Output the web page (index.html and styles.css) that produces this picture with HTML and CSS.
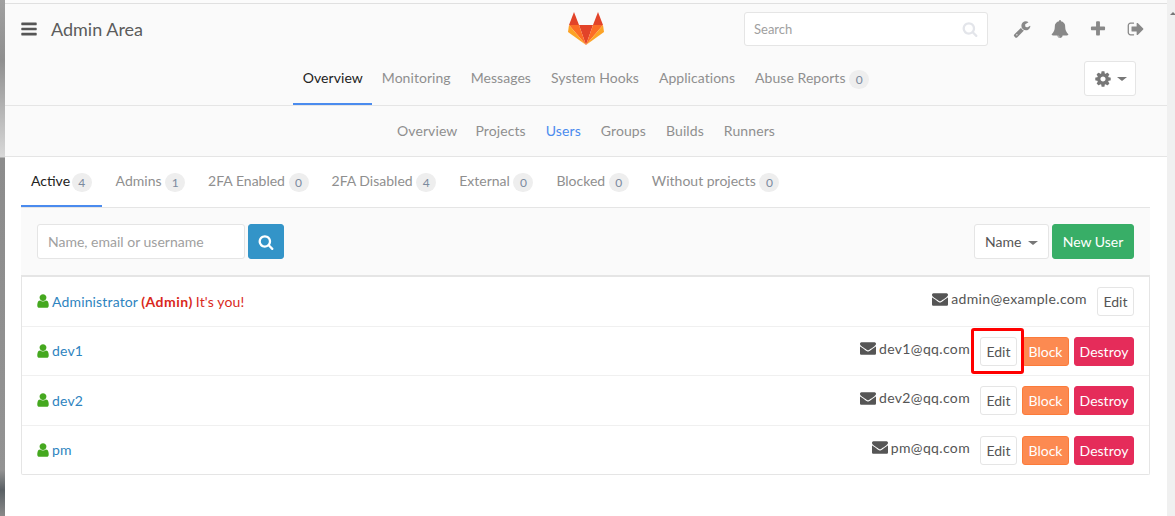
FILE: index.html
```html
<!DOCTYPE html>
<html lang="en">
<head>
  <meta charset="UTF-8" />
  <meta name="viewport" content="width=device-width, initial-scale=1.0" />
  <title>Admin Area</title>
  <link rel="stylesheet" href="styles.css">
</head>
<body>
  <!-- Icon set -->
  <svg class="sprite" xmlns="http://www.w3.org/2000/svg">
    <symbol id="i-bars" viewBox="0 0 1792 1792"><path d="M1664 1344v128q0 26-19 45t-45 19H192q-26 0-45-19t-19-45v-128q0-26 19-45t45-19h1408q26 0 45 19t19 45zm0-512v128q0 26-19 45t-45 19H192q-26 0-45-19t-19-45V832q0-26 19-45t45-19h1408q26 0 45 19t19 45zm0-512v128q0 26-19 45t-45 19H192q-26 0-45-19t-19-45V320q0-26 19-45t45-19h1408q26 0 45 19t19 45z"/></symbol>
    <symbol id="i-search" viewBox="0 0 1792 1792"><path d="M1216 832q0-185-131.500-316.500t-316.500-131.500-316.500 131.500-131.500 316.500 131.500 316.500 316.500 131.500 316.500-131.500 131.500-316.500zm512 832q0 52-38 90t-90 38q-54 0-90-38l-343-342q-179 124-399 124-143 0-273.500-55.500t-225-150-150-225-55.500-273.500 55.500-273.500 150-225 225-150 273.500-55.500 273.500 55.500 225 150 150 225 55.500 273.500q0 220-124 399l343 343q37 37 37 90z"/></symbol>
    <symbol id="i-user" viewBox="0 0 1792 1792"><path d="M1536 1399q0 109-62.500 187t-150.500 78h-854q-88 0-150.500-78t-62.500-187q0-85 8.500-160.500t31.500-152 58.500-131 94-89 134.500-34.500q131 128 313 128t313-128q76 0 134.500 34.500t94 89 58.500 131 31.500 152 8.500 160.500zm-256-887q0 159-112.500 271.500t-271.500 112.500-271.500-112.500-112.500-271.500 112.500-271.500 271.500-112.500 271.500 112.500 112.500 271.500z"/></symbol>
    <symbol id="i-envelope" viewBox="0 0 1792 1792"><path d="M1792 710v794q0 66-47 113t-113 47H160q-66 0-113-47T0 1504V710q44 49 101 87 362 246 497 345 57 42 92.500 65.500t94.500 48 110 24.500h2q51 0 110-24.500t94.500-48 92.500-65.500q170-123 498-345 57-39 100-87zm0-294q0 79-49 151t-122 123q-376 261-468 325-10 7-42.500 30.500t-54 38-52 32.500-57.500 27-50 9h-2q-23 0-50-9t-57.500-27-52-32.500-54-38T639 1015q-91-64-262-182.500T172 690q-62-42-117-115.500T0 438q0-78 41.500-130T160 256h1472q65 0 112.500 47t47.500 113z"/></symbol>
    <symbol id="i-plus" viewBox="0 0 1792 1792"><path d="M1600 736v192q0 40-28 68t-68 28h-416v416q0 40-28 68t-68 28h-192q-40 0-68-28t-28-68v-416h-416q-40 0-68-28t-28-68v-192q0-40 28-68t68-28h416v-416q0-40 28-68t68-28h192q40 0 68 28t28 68v416h416q40 0 68 28t28 68z"/></symbol>
    <symbol id="i-bell" viewBox="0 0 1792 1792"><path d="M912 1696q0-16-16-16-59 0-101.500-42.500t-42.500-101.500q0-16-16-16t-16 16q0 73 51.500 124.500t124.500 51.500q16 0 16-16zm816-288q0 52-38 90t-90 38h-448q0 106-75 181t-181 75-181-75-75-181h-448q-52 0-90-38t-38-90q50-42 91-88t85-119.500 74.500-158.500 50-206 19.500-260q0-152 117-282.500t307-158.500q-8-19-8-39 0-40 28-68t68-28 68 28 28 68q0 20-8 39 190 28 307 158.500t117 282.500q0 139 19.500 260t50 206 74.500 158.500 85 119.500 91 88z"/></symbol>
    <symbol id="i-signout" viewBox="0 0 1792 1792"><path d="M704 1440q0 4 1 20t.5 26.500-3 23.500-10 19.500-20.500 6.500h-320q-119 0-203.500-84.500t-84.500-203.500v-704q0-119 84.500-203.500t203.500-84.500h320q13 0 22.500 9.500t9.500 22.500q0 4 1 20t.5 26.500-3 23.500-10 19.500-20.500 6.500h-320q-66 0-113 47t-47 113v704q0 66 47 113t113 47h312l11.500 1 11.500 3 8 5.500 7 9 2 13.500zm928-544q0 26-19 45l-544 544q-19 19-45 19t-45-19-19-45v-288h-448q-26 0-45-19t-19-45v-384q0-26 19-45t45-19h448v-288q0-26 19-45t45-19 45 19l544 544q19 19 19 45z"/></symbol>
    <symbol id="i-wrench" viewBox="0 0 1792 1792"><path d="M448 1472q0-26-19-45t-45-19-45 19-19 45 19 45 45 19 45-19 19-45zm644-420l-682 682q-37 37-90 37-52 0-91-37l-106-108q-38-36-38-90 0-53 38-91l681-681q39 98 114.500 173.500t173.500 114.500zm634-435q0 39-23 106-47 134-164.500 217.500t-258.500 83.500q-185 0-316.500-131.500t-131.500-316.500 131.500-316.500 316.500-131.500q58 0 121.500 16.500t107.500 46.500q16 11 16 28t-16 28l-293 169v224l193 107q5-3 79-48.500t135.500-81 70.500-35.500q15 0 23.500 10t8.500 25z"/></symbol>
    <symbol id="i-cog" viewBox="0 0 1792 1792"><path d="M1152 896q0-106-75-181t-181-75-181 75-75 181 75 181 181 75 181-75 75-181zm512-109v222q0 12-8 23t-20 13l-185 28q-19 54-39 91 35 50 107 138 10 12 10 25t-9 23q-27 37-99 108t-94 71q-12 0-26-9l-138-108q-44 23-91 38-16 136-29 186-7 28-36 28h-222q-14 0-24.500-8.500t-11.500-21.500l-28-184q-49-16-90-37l-141 107q-10 9-25 9-14 0-25-11-126-114-165-168-7-10-7-23 0-12 8-23 15-21 51-66.500t54-70.500q-27-50-41-99l-183-27q-13-2-21-12.500t-8-23.500v-222q0-12 8-23t19-13l186-28q14-46 39-92-40-57-107-138-10-12-10-24 0-10 9-23 26-36 98.500-107.500t94.500-71.500q13 0 26 10l138 107q44-23 91-38 16-136 29-186 7-28 36-28h222q14 0 24.500 8.500t11.500 21.500l28 184q49 16 90 37l142-107q9-9 24-9 13 0 25 10 129 119 165 170 7 8 7 22 0 12-8 23-15 21-51 66.500t-54 70.500q26 50 41 98l183 28q13 2 21 12.500t8 23.500z"/></symbol>
  </svg>

  <div class="edge"></div>

  <div class="page">
    <div class="top-strip"></div>

    <header class="header">
      <div class="top-row">
        <div class="title-area">
          <svg class="icon icon-bars"><use href="#i-bars"/></svg>
          <span class="title">Admin Area</span>
        </div>
        <svg class="logo" viewBox="0 0 36 33">
          <polygon fill="#e24329" points="18,33 11,13 25,13"/>
          <polygon fill="#fc6d26" points="18,33 11,13 1,13"/>
          <polygon fill="#fca326" points="1,13 0,20 18,33"/>
          <polygon fill="#e24329" points="1,13 11,13 6,0"/>
          <polygon fill="#fc6d26" points="18,33 25,13 35,13"/>
          <polygon fill="#fca326" points="35,13 36,20 18,33"/>
          <polygon fill="#e24329" points="35,13 25,13 30,0"/>
        </svg>
        <div class="top-actions">
          <div class="search-box">
            <span>Search</span>
            <svg class="icon icon-search-light"><use href="#i-search"/></svg>
          </div>
          <div class="top-icons">
            <svg class="icon"><use href="#i-wrench"/></svg>
            <svg class="icon"><use href="#i-bell"/></svg>
            <svg class="icon"><use href="#i-plus"/></svg>
            <svg class="icon"><use href="#i-signout"/></svg>
          </div>
        </div>
      </div>

      <div class="nav-row">
        <nav class="nav">
          <a class="nav-link active">Overview</a>
          <a class="nav-link">Monitoring</a>
          <a class="nav-link">Messages</a>
          <a class="nav-link">System Hooks</a>
          <a class="nav-link">Applications</a>
          <a class="nav-link">Abuse Reports <span class="badge">0</span></a>
        </nav>
        <div class="nav-controls">
          <button class="btn btn-settings">
            <svg class="icon icon-cog"><use href="#i-cog"/></svg>
            <span class="caret"></span>
          </button>
        </div>
      </div>
    </header>

    <nav class="subnav">
      <a class="sub-link">Overview</a>
      <a class="sub-link">Projects</a>
      <a class="sub-link current">Users</a>
      <a class="sub-link">Groups</a>
      <a class="sub-link">Builds</a>
      <a class="sub-link">Runners</a>
    </nav>

    <main class="content">
      <div class="tabs">
        <a class="tab active">Active <span class="badge">4</span></a>
        <a class="tab">Admins <span class="badge">1</span></a>
        <a class="tab">2FA Enabled <span class="badge">0</span></a>
        <a class="tab">2FA Disabled <span class="badge">4</span></a>
        <a class="tab">External <span class="badge">0</span></a>
        <a class="tab">Blocked <span class="badge">0</span></a>
        <a class="tab">Without projects <span class="badge">0</span></a>
      </div>

      <div class="filter-bar">
        <div class="filter-search">
          <div class="filter-input">Name, email or username</div>
          <button class="btn btn-search"><svg class="icon icon-white"><use href="#i-search"/></svg></button>
        </div>
        <div class="filter-actions">
          <button class="btn btn-name">Name <span class="caret"></span></button>
          <button class="btn btn-new">New User</button>
        </div>
      </div>

      <ul class="user-list">
        <li class="user-row">
          <div class="user-name">
            <svg class="icon icon-user"><use href="#i-user"/></svg>
            <a class="user-link">Administrator</a>
            <strong class="you you-role">(Admin)</strong>
            <span class="you">It's you!</span>
          </div>
          <div class="user-side">
            <span class="email"><svg class="icon icon-mail"><use href="#i-envelope"/></svg>admin@example.com</span>
            <button class="btn btn-sm">Edit</button>
          </div>
        </li>
        <li class="user-row">
          <div class="user-name">
            <svg class="icon icon-user"><use href="#i-user"/></svg>
            <a class="user-link">dev1</a>
          </div>
          <div class="user-side">
            <span class="email"><svg class="icon icon-mail"><use href="#i-envelope"/></svg>dev1@qq.com</span>
            <div class="row-actions">
              <button class="btn btn-sm marked">Edit</button>
              <button class="btn btn-sm btn-block">Block</button>
              <button class="btn btn-sm btn-destroy">Destroy</button>
            </div>
          </div>
        </li>
        <li class="user-row">
          <div class="user-name">
            <svg class="icon icon-user"><use href="#i-user"/></svg>
            <a class="user-link">dev2</a>
          </div>
          <div class="user-side">
            <span class="email"><svg class="icon icon-mail"><use href="#i-envelope"/></svg>dev2@qq.com</span>
            <div class="row-actions">
              <button class="btn btn-sm">Edit</button>
              <button class="btn btn-sm btn-block">Block</button>
              <button class="btn btn-sm btn-destroy">Destroy</button>
            </div>
          </div>
        </li>
        <li class="user-row">
          <div class="user-name">
            <svg class="icon icon-user"><use href="#i-user"/></svg>
            <a class="user-link">pm</a>
          </div>
          <div class="user-side">
            <span class="email"><svg class="icon icon-mail"><use href="#i-envelope"/></svg>pm@qq.com</span>
            <div class="row-actions">
              <button class="btn btn-sm">Edit</button>
              <button class="btn btn-sm btn-block">Block</button>
              <button class="btn btn-sm btn-destroy">Destroy</button>
            </div>
          </div>
        </li>
      </ul>
    </main>
  </div>

  <div class="scrollbar"></div>
</body>
</html>
```

FILE: styles.css
```css
html, body {
  margin: 0;
  padding: 0;
  height: 100%;
  overflow: hidden;
  background-color: #fff;
}

body {
  display: flex;
  font-family: 'Lato', 'Liberation Sans', sans-serif;
  font-size: 14px;
  color: #555;
}

a {
  text-decoration: none;
}

.sprite {
  display: none;
}

.edge {
  width: 5px;
  flex: none;
  background: linear-gradient(#a0a0a0 0, #8f8f8f 60px, #d8d8d8 157px, #8c8c8c 158px, #939393 470px, #5a6064 490px, #8a8a8a 516px);
}

.page {
  flex: 1;
  min-width: 0;
}

.scrollbar {
  width: 8px;
  flex: none;
  position: relative;
  background-color: #f0f0f0;
}

.scrollbar::before {
  content: '';
  position: absolute;
  top: 12px;
  right: -1px;
  width: 0;
  height: 0;
  border-left: 3px solid transparent;
  border-right: 3px solid transparent;
  border-bottom: 3px solid #777;
}

.top-strip {
  height: 3px;
  background-color: #fbfbfb;
  border-bottom: 1px solid #e0e0e0;
}

.icon {
  width: 18px;
  height: 18px;
  fill: #888;
  flex: none;
}

/* Header */
.header {
  background-color: #fafafa;
  border-bottom: 1px solid #e5e5e5;
}

.top-row {
  height: 50px;
  display: grid;
  grid-template-columns: 1fr auto 1fr;
  align-items: center;
}

.title-area {
  display: flex;
  align-items: center;
  padding-left: 15px;
}

.icon-bars {
  width: 18px;
  height: 18px;
  fill: #555;
  margin-right: 13px;
}

.title {
  font-size: 18px;
  color: #5c5c5c;
}

.logo {
  width: 36px;
  height: 33px;
  margin-top: -1px;
}

.top-actions {
  display: flex;
  justify-content: flex-end;
  align-items: center;
  padding-right: 22px;
}

.search-box {
  width: 224px;
  height: 32px;
  margin-right: 25px;
  padding: 0 9px;
  display: flex;
  align-items: center;
  justify-content: space-between;
  background-color: #fff;
  border: 1px solid #e5e5e5;
  border-radius: 3px;
  font-size: 13px;
  color: #a0a0a0;
}

.icon-search-light {
  width: 16px;
  height: 16px;
  fill: #e3e5ea;
}

.top-icons {
  display: flex;
  gap: 20px;
}

.nav-row {
  height: 51px;
  display: grid;
  grid-template-columns: 1fr auto 1fr;
}

.nav {
  grid-column: 2;
  display: flex;
}

.nav-link {
  padding: 0 10px;
  line-height: 48px;
  height: 49px;
  color: #8f8f8f;
  white-space: nowrap;
  letter-spacing: .05px;
  border-bottom: 2px solid transparent;
}

.nav-link.active {
  padding-right: 9px;
  color: #222;
  border-bottom-color: #4a8bee;
}

.badge {
  display: inline-block;
  min-width: 20px;
  line-height: 19px;
  box-sizing: border-box;
  padding: 0 3px;
  border-radius: 10px;
  background-color: #eee;
  color: #7b8a9e;
  font-size: 12px;
  text-align: center;
  vertical-align: -1px;
}

.nav-controls {
  grid-column: 3;
  display: flex;
  justify-content: flex-end;
  align-items: flex-start;
  padding: 7px 31px 0 0;
}

/* Buttons */
.btn {
  font-family: inherit;
  font-size: 14px;
  color: #555;
  background-color: #fff;
  border: 1px solid #e5e5e5;
  border-radius: 3px;
  padding: 0;
  height: 35px;
}

.btn-settings {
  width: 52px;
  display: flex;
  align-items: center;
  justify-content: center;
  gap: 5px;
}

.icon-cog {
  width: 18px;
  height: 18px;
  fill: #777;
}

.caret {
  display: inline-block;
  width: 0;
  height: 0;
  border-left: 5px solid transparent;
  border-right: 5px solid transparent;
  border-top: 4px solid #777;
  vertical-align: 2px;
}

/* Sub navigation */
.subnav {
  height: 48px;
  padding-bottom: 2px;
  display: flex;
  justify-content: center;
  align-items: center;
  gap: 20px;
  background-color: #fafafa;
  border-bottom: 1px solid #e5e5e5;
}

.sub-link {
  color: #8f8f8f;
  letter-spacing: .1px;
}

.sub-link:first-child {
  margin-right: -2px;
}

.sub-link.current {
  color: #4a8bee;
}

/* Main */
.content {
  padding: 0 17px 0 16px;
}

.tabs {
  height: 50px;
  display: flex;
  gap: 3px;
  border-bottom: 1px solid #e5e5e5;
}

.tab {
  height: 48px;
  line-height: 48px;
  padding: 0 10px;
  color: #8f8f8f;
  white-space: nowrap;
  border-bottom: 2px solid transparent;
}

.tab.active {
  margin-right: 1px;
  color: #222;
  border-bottom-color: #4a8bee;
}

.tab.active .badge {
  margin-left: -2px;
}

.filter-bar {
  height: 68px;
  box-sizing: border-box;
  padding: 16px;
  display: flex;
  justify-content: space-between;
  background-color: #fafafa;
  border-bottom: 1px solid #e5e5e5;
}

.filter-search,
.filter-actions {
  display: flex;
  gap: 3px;
}

.filter-input {
  width: 186px;
  height: 33px;
  padding: 0 10px;
  line-height: 33px;
  background-color: #fff;
  border: 1px solid #e5e5e5;
  border-radius: 3px;
  color: #a0a0a0;
  white-space: nowrap;
}

.btn-search {
  width: 36px;
  display: flex;
  align-items: center;
  justify-content: center;
  background-color: #3394c8;
  border-color: #3394c8;
}

.icon-white {
  width: 16px;
  height: 16px;
  fill: #fff;
}

.btn-name {
  width: 75px;
}

.btn-name .caret {
  margin-left: 3px;
}

.btn-new {
  width: 82px;
  background-color: #38ae67;
  border-color: #38ae67;
  color: #fff;
}

/* User list */
.user-list {
  margin: 0;
  padding: 0;
  list-style: none;
  border: 1px solid #e5e5e5;
  border-top: 0;
  border-radius: 0 0 2px 2px;
}

.user-row {
  height: 49px;
  box-sizing: border-box;
  padding: 0 15px;
  display: flex;
  justify-content: space-between;
  align-items: center;
  border-top: 1px solid #f0f0f0;
}

.user-row:first-child {
  height: 50px;
  border-top-color: #e5e5e5;
}

.user-row:nth-child(3) {
  height: 50px;
}

.user-name {
  display: flex;
  align-items: center;
  gap: 3px;
  padding-bottom: 1px;
  letter-spacing: .15px;
}

.icon-user {
  width: 16px;
  height: 16px;
  fill: #45a81f;
  margin: 0 -2px;
}

.user-link {
  color: #2e84c0;
}

.you {
  color: #d9281c;
}

.you-role {
  letter-spacing: .5px;
}

.user-side {
  display: flex;
  align-items: center;
  gap: 10px;
}

.email {
  display: flex;
  align-items: center;
  gap: 3px;
  padding-bottom: 6px;
  letter-spacing: .35px;
}

.icon-mail {
  width: 16px;
  height: 16px;
  fill: #555;
}

.row-actions {
  display: flex;
  gap: 5px;
}

.btn-sm {
  width: 37px;
  height: 29px;
}

.btn-block {
  width: 47px;
  background-color: #fc8a51;
  border-color: #fc7b3a;
  color: #fff;
}

.btn-destroy {
  width: 60px;
  background-color: #e52c5a;
  border-color: #e52c5a;
  color: #fff;
}

/* Red annotation box round the first Edit */
.marked {
  position: relative;
}

.marked::after {
  content: '';
  position: absolute;
  left: -10px;
  right: -8px;
  top: -10px;
  bottom: -9px;
  border: 3px solid #f00;
  border-radius: 3px;
}
```
